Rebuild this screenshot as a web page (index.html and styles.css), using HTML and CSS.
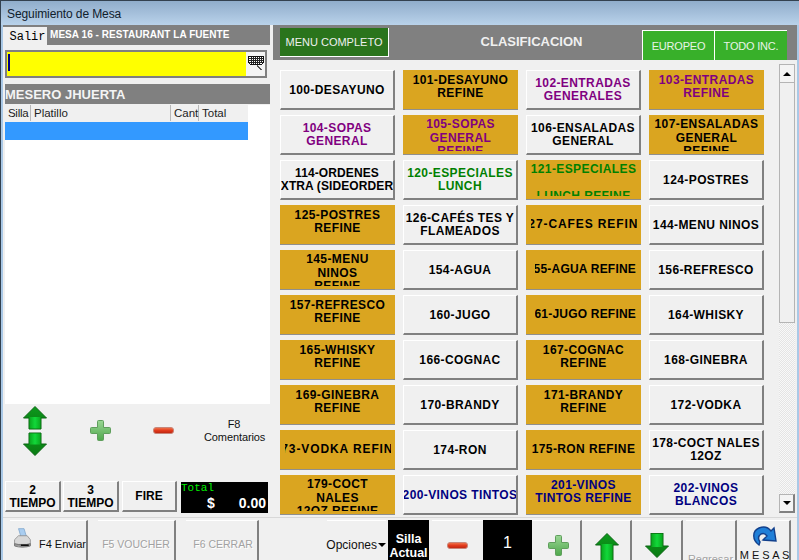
FILE: index.html
```html
<!DOCTYPE html>
<html lang="es">
<head>
<meta charset="utf-8">
<title>Seguimiento de Mesa</title>
<link rel="stylesheet" href="styles.css">
</head>
<body>
<svg class="defs" width="0" height="0" aria-hidden="true">
  <defs>
    <linearGradient id="gArrow" x1="0" y1="0" x2="0" y2="1"><stop offset="0" stop-color="#0c9a1c"/><stop offset="1" stop-color="#0a7a12"/></linearGradient>
    <linearGradient id="gShaft" x1="0" y1="0" x2="1" y2="0"><stop offset="0" stop-color="#0aa81e"/><stop offset="0.5" stop-color="#12d83a"/><stop offset="1" stop-color="#0aa81e"/></linearGradient>
    <linearGradient id="gPlus" x1="0" y1="0" x2="0" y2="1"><stop offset="0" stop-color="#9ad694"/><stop offset="1" stop-color="#4fa84c"/></linearGradient>
    <linearGradient id="gMinus" x1="0" y1="0" x2="0" y2="1"><stop offset="0" stop-color="#f07a50"/><stop offset="0.5" stop-color="#e23a1c"/><stop offset="1" stop-color="#b82410"/></linearGradient>
    <symbol id="plus" viewBox="0 0 21 21"><path d="M7.5 1.5a1 1 0 0 1 1-1h4a1 1 0 0 1 1 1v6h6a1 1 0 0 1 1 1v4a1 1 0 0 1-1 1h-6v6a1 1 0 0 1-1 1h-4a1 1 0 0 1-1-1v-6h-6a1 1 0 0 1-1-1v-4a1 1 0 0 1 1-1h6z" fill="url(#gPlus)" stroke="#5f9e5c"/></symbol>
    <symbol id="minus" viewBox="0 0 21 7"><rect x="0.5" y="0.5" width="20" height="6" rx="2.5" fill="url(#gMinus)" stroke="#c8867a"/></symbol>
  </defs>
</svg>
<div class="window">
  <div class="titlebar">Seguimiento de Mesa</div>
  <div class="client">
    <button class="salir">Salir</button>
    <div class="main">
      <section class="left">
        <div class="mesa-bar">MESA 16 - RESTAURANT LA FUENTE</div>
        <div class="search">
          <div class="search-field"><span class="caret"></span></div>
          <div class="kbd">
            <svg width="16" height="14" viewBox="0 0 16 14" shape-rendering="crispEdges"><path d="M.5.5h15v6l-2 2h-11l-2-2z" fill="#fff" stroke="#111"/><path d="M1 2.5h14M1 4.5h14M1 6.5h14M3.5 1v7M5.5 1v7M7.5 1v7M9.5 1v7M11.5 1v7M13.5 1v6" stroke="#222"/><path d="M9 9h1v1h1v1h1v1h1v1h1v1h-2v-1h-1v-1h-1v-1H9z" fill="#555"/></svg>
          </div>
        </div>
        <div class="mesero-bar">MESERO JHUERTA</div>
        <div class="list">
          <div class="list-head">
            <span class="col-silla">Silla</span>
            <span class="col-platillo">Platillo</span>
            <span class="col-cant">Cant</span>
            <span class="col-total">Total</span>
          </div>
          <div class="list-row"></div>
        </div>
        <div class="controls">
          <div class="ctl-arrows">
            <svg width="24" height="50" viewBox="0 0 24 50">
              <path d="M12 .5 23.5 12H18v11H6V12H.5z" fill="url(#gArrow)" stroke="#0a6412"/>
              <rect x="6.5" y="11" width="11" height="11.5" fill="url(#gShaft)"/>
              <path d="M12 49.5 23.5 38H18V27H6v11H.5z" fill="url(#gArrow)" stroke="#0a6412"/>
              <rect x="6.5" y="27.5" width="11" height="11" fill="url(#gShaft)"/>
            </svg>
          </div>
          <div class="ctl-plus"><svg width="21" height="21"><use href="#plus"/></svg></div>
          <div class="ctl-minus"><svg width="21" height="7"><use href="#minus"/></svg></div>
          <div class="ctl-coment">F8<br>Comentarios</div>
        </div>
        <div class="actions">
          <button class="btn act act-a">2<br>TIEMPO</button>
          <button class="btn act act-a">3<br>TIEMPO</button>
          <button class="btn act act-b">FIRE</button>
          <div class="total">
            <div class="total-label">Total</div>
            <div class="total-val"><span>$</span><span>0.00</span></div>
          </div>
        </div>
      </section>
      <section class="right">
        <div class="class-bar">
          <button class="menu-full">MENU COMPLETO</button>
          <div class="class-title">CLASIFICACION</div>
          <div class="tabs">
            <button class="tab tab-eu">EUROPEO</button>
            <button class="tab tab-ti">TODO INC.</button>
          </div>
        </div>
        <div class="menu-wrap">
          <div class="grid">
            <button class="btn item">100-DESAYUNO</button>
            <button class="btn item gold">101-DESAYUNO<br>REFINE</button>
            <button class="btn item purple">102-ENTRADAS<br>GENERALES</button>
            <button class="btn item gold purple">103-ENTRADAS<br>REFINE</button>

            <button class="btn item purple">104-SOPAS<br>GENERAL</button>
            <button class="btn item gold purple tall">105-SOPAS<br>GENERAL<br>REFINE</button>
            <button class="btn item">106-ENSALADAS<br>GENERAL</button>
            <button class="btn item gold tall">107-ENSALADAS<br>GENERAL<br>REFINE</button>

            <button class="btn item snug">114-ORDENES<br>XTRA (SIDEORDER</button>
            <button class="btn item green">120-ESPECIALES<br>LUNCH</button>
            <button class="btn item gold green tall">121-ESPECIALES<br><br>LUNCH REFINE</button>
            <button class="btn item">124-POSTRES</button>

            <button class="btn item gold">125-POSTRES<br>REFINE</button>
            <button class="btn item">126-CAFÉS TES Y<br>FLAMEADOS</button>
            <button class="btn item gold one clip-both">127-CAFES REFINE</button>
            <button class="btn item">144-MENU NINOS</button>

            <button class="btn item gold tall">145-MENU<br>NINOS<br>REFINE</button>
            <button class="btn item">154-AGUA</button>
            <button class="btn item gold one clip-left">155-AGUA REFINE</button>
            <button class="btn item">156-REFRESCO</button>

            <button class="btn item gold">157-REFRESCO<br>REFINE</button>
            <button class="btn item">160-JUGO</button>
            <button class="btn item gold one clip-left">161-JUGO REFINE</button>
            <button class="btn item">164-WHISKY</button>

            <button class="btn item gold">165-WHISKY<br>REFINE</button>
            <button class="btn item">166-COGNAC</button>
            <button class="btn item gold">167-COGNAC<br>REFINE</button>
            <button class="btn item">168-GINEBRA</button>

            <button class="btn item gold">169-GINEBRA<br>REFINE</button>
            <button class="btn item">170-BRANDY</button>
            <button class="btn item gold">171-BRANDY<br>REFINE</button>
            <button class="btn item">172-VODKA</button>

            <button class="btn item gold one clip-both">173-VODKA REFINE</button>
            <button class="btn item">174-RON</button>
            <button class="btn item gold one">175-RON REFINE</button>
            <button class="btn item">178-COCT NALES<br>12OZ</button>

            <button class="btn item gold tall">179-COCT<br>NALES<br>12OZ REFINE</button>
            <button class="btn item navy">200-VINOS TINTOS</button>
            <button class="btn item gold navy">201-VINOS<br>TINTOS REFINE</button>
            <button class="btn item navy">202-VINOS<br>BLANCOS</button>
          </div>
          <div class="scroll">
            <div class="sb-btn"><span class="tri-up"></span></div>
            <div class="sb-thumb"></div>
            <div class="sb-track"></div>
            <div class="sb-btn sb-btn-down"><span class="tri-down"></span></div>
          </div>
        </div>
      </section>
    </div>
    <div class="bottom">
      <div class="bottom-left">
        <button class="bb bb-f4">
          <svg width="24" height="25" viewBox="0 0 24 25">
            <path d="M7 0h7l3 10H10z" fill="#a9cdf0" stroke="#7fa6cc"/>
            <path d="M2 14 7 9h11l4 5v6H2z" fill="#d8d8d8" stroke="#8a8a8a"/>
            <path d="M2 19c6 2 14 2 20 0v3c-6 2-14 2-20 0z" fill="#9a9a9a" stroke="#6a6a6a"/>
            <path d="M10 21h10" stroke="#111" stroke-width="2"/>
          </svg>
          <span>F4 Enviar</span>
        </button>
        <button class="bb bb-f5 off">F5 VOUCHER</button>
        <button class="bb bb-f6 off">F6 CERRAR</button>
      </div>
      <div class="bottom-right">
        <button class="bb opc"><span>Opciones</span><span class="tri-down opc-tri"></span></button>
        <div class="silla">Silla<br>Actual</div>
        <button class="bb sq sq-minus"><svg width="21" height="7"><use href="#minus"/></svg></button>
        <div class="num">1</div>
        <button class="bb sq sq-plus"><svg width="21" height="21"><use href="#plus"/></svg></button>
        <button class="bb sq sq-up">
          <svg width="24" height="28" viewBox="0 0 24 28"><path d="M12 .5 23.5 12H18v16H6V12H.5z" fill="url(#gArrow)" stroke="#0a6412"/><rect x="6.5" y="11" width="11" height="17" fill="url(#gShaft)"/></svg>
        </button>
        <button class="bb sq sq-down">
          <svg width="24" height="25" viewBox="0 0 24 25"><path d="M12 24.5 23.5 13H18V0H6v13H.5z" fill="url(#gArrow)" stroke="#0a6412"/><rect x="6.5" y="1" width="11" height="13" fill="url(#gShaft)"/></svg>
        </button>
        <button class="bb regresar off">Regresar</button>
        <button class="bb mesas">
          <svg width="25" height="21" viewBox="0 0 25 21"><path d="M7 20C0 15 0 6 7 3c5-2 9-1 12 3l3-3 2 13-13-1 4-4c-2-3-4-3-6-2-3 2-3 5-1 8z" fill="#1f7fd8" stroke="#12408c" stroke-width="1.4"/></svg>
          <span>M E S A S</span>
        </button>
      </div>
    </div>
  </div>
</div>
</body>
</html>
```
FILE: styles.css
```css
* { box-sizing: border-box; }
html, body { margin: 0; padding: 0; }
body { width: 799px; height: 560px; overflow: hidden; font-family: "Liberation Sans", Arial, sans-serif; }
button { font-family: inherit; padding: 0; margin: 0; cursor: default; white-space: nowrap; }
.defs { position: absolute; }

.window {
  width: 799px; height: 560px; display: flex; flex-direction: column; overflow: hidden;
  background: #a9c8e6; border-left: 1px solid #33414f; padding-right: 2px;
}
.titlebar {
  height: 25px; flex: none; margin-left: -1px; padding: 6px 0 0 7px;
  font-size: 12px; line-height: 15px; letter-spacing: -0.1px; color: #10202c; margin-right: -2px;
  background: linear-gradient(#90adcb, #b9d2ea);
  border-top: 1px solid #33414f;
}
.client { position: relative; flex: 1; display: flex; flex-direction: column; margin-left: 2px; background: #f0f0f0; min-height: 0; }
.salir {
  position: absolute; left: 0; top: 2px; width: 44px; height: 18px; border: 0; padding-left: 5px;
  background: #f0f0f0; font: 12px/20px "Liberation Mono", monospace; color: #000;
}
.main { display: flex; height: 492px; flex: none; }

/* left panel */
.left { width: 267px; flex: none; display: flex; flex-direction: column; }
.mesa-bar {
  height: 20px; background: #808080; color: #fff; font-weight: bold; font-size: 10px;
  line-height: 20px; padding-left: 47px; flex: none; letter-spacing: 0.05px;
}
.search { display: flex; height: 28px; margin: 5px 3px 6px 2px; border: 2px solid #808080; flex: none; }
.search-field { flex: 1; background: #ffff00; padding: 2px 0 0 1px; }
.caret { display: block; width: 2px; height: 17px; background: #000080; }
.kbd { width: 19px; background: #f4f4f4; display: flex; justify-content: center; padding-top: 4px; }
.mesero-bar {
  height: 20px; margin-left: 2px; background: #808080; color: #f4f4f4; font-weight: bold;
  font-size: 13px; line-height: 21px; flex: none;
}
.list { height: 299px; margin: 1px 0 0 2px; background: #fff; flex: none; }
.list-head { width: 243px; height: 17px; background: #f0f0f0; display: flex; font-size: 11.5px; line-height: 17px; color: #222; }
.list-head span { border-right: 1px solid #b8b8b8; padding-left: 3px; height: 16px; }
.col-silla { width: 26px; letter-spacing: -0.3px; }
.col-platillo { width: 140px; }
.col-cant { width: 28px; }
.col-total { flex: 1; border-right: 0 !important; }
.list-row { width: 243px; height: 18px; background: #3399ff; }

.controls { height: 77px; display: flex; align-items: center; padding: 0 0 24px 2px; flex: none; font-size: 11px; color: #111; }
.ctl-arrows { width: 60px; display: flex; justify-content: center; }
.ctl-plus { width: 70px; display: flex; justify-content: center; }
.ctl-minus { width: 56px; display: flex; justify-content: center; }
.ctl-coment { margin-left: 13px; width: 60px; text-align: center; line-height: 13px; font-size: 11px; letter-spacing: -0.1px; }

.btn {
  border: 1px solid; border-color: #fff #808080 #808080 #fff; border-width: 1px 2px 2px 1px;
  background: #f0f0f0; color: #000; font-weight: bold; font-size: 12px; letter-spacing: 0.4px;
}
.actions { display: flex; height: 33px; padding-left: 2px; flex: none; }
.act { height: 31px; line-height: 13px; font-size: 12px; letter-spacing: 0; padding-top: 2px; }
.act-a { width: 56px; margin-right: 2px; }
.act-b { width: 55px; margin-left: 1px; margin-right: 4px; padding-top: 0; }
.total { width: 87px; height: 31px; background: #000; color: #fff; margin-top: 1px; }
.total-label { font: 11px/11px "Liberation Mono", monospace; color: #00f000; padding-top: 1px; }
.total-val { display: flex; justify-content: space-between; padding: 2px 2px 0 26px; font-weight: bold; font-size: 14px; line-height: 14px; }

/* right panel */
.right { flex: 1; margin-left: 3px; display: flex; flex-direction: column; min-width: 0; }
.class-bar { height: 35px; background: #808080; display: flex; flex: none; padding-left: 7px; }
.menu-full {
  width: 109px; height: 29px; margin-top: 3px; background: #2a741c; color: #f0f0f0;
  border: 0; border-right: 1px solid #fff; border-bottom: 1px solid #fff; font-size: 11px;
}
.class-title { flex: 1; text-align: center; color: #f0f0f0; font-weight: bold; font-size: 13px; line-height: 34px; padding-left: 32px; }
.tabs { display: flex; margin-right: 10px; margin-top: 5px; height: 30px; }
.tab {
  height: 30px; background: #38b02a; color: #e8f4e8; border: 0; border-top: 1px solid #fff; border-left: 1px solid #fff;
  font-size: 11px; letter-spacing: -0.2px;
}
.tab-eu { width: 72px; }
.tab-ti { width: 73px; }
.menu-wrap { flex: 1; display: flex; align-items: flex-start; padding: 4px 0 0 7px; min-height: 0; }
.grid { display: grid; grid-template-columns: repeat(4, 115px); grid-auto-rows: 40px; column-gap: 8px; row-gap: 5px; margin-top: 6px; }
.item {
  height: 40px; width: 115px; overflow: hidden; display: flex; align-items: center; justify-content: center;
  text-align: center; white-space: nowrap; line-height: 13px; padding-top: 1px;
}
.snug { letter-spacing: 0.1px; }
.gold { background: #daa520; border: 0; height: 39px; box-shadow: 0 1px 0 #8f8f8f; padding-top: 0; padding-bottom: 6px; }
.one { padding-bottom: 0; }
.clip-both { letter-spacing: 0.9px; border-left: 5px solid #daa520; border-right: 4px solid #daa520; }
.clip-left { letter-spacing: 0.2px; justify-content: flex-end; border-left: 9px solid #daa520; border-right: 5px solid #daa520; }
.tall { align-items: flex-start; padding-top: 3px; padding-bottom: 0; line-height: 13.5px; border-bottom: 3px solid #daa520; }
.purple { color: #800080; }
.green { color: #008000; }
.navy { color: #000080; }

.scroll { width: 16px; height: 449px; margin-left: 15px; display: flex; flex-direction: column; flex: none; }
.sb-btn { height: 19px; border: 1px solid #b4b4b4; background: #f4f4f4; display: flex; align-items: center; justify-content: center; flex: none; }
.sb-btn-down { border-bottom: 2px solid #808080; border-right: 2px solid #808080; }
.sb-thumb { height: 240px; background: #f0f0f0; border: 1px solid #b4b4b4; border-top: 0; flex: none; }
.sb-track {
  flex: 1; background-color: #f6f6f6;
  background-image: repeating-conic-gradient(#e4e4e4 0 25%, #f8f8f8 0 50%); background-size: 2px 2px;
}
.tri-up { width: 0; height: 0; border-left: 4px solid transparent; border-right: 4px solid transparent; border-bottom: 4px solid #000; }
.tri-down { width: 0; height: 0; border-left: 4px solid transparent; border-right: 4px solid transparent; border-top: 4px solid #000; }

/* bottom */
.bottom { flex: 1; display: flex; min-height: 0; padding-top: 2px; border-top: 1px solid #d8d8d8; }
.bottom-left { display: flex; padding-left: 7px; width: 324px; flex: none; }
.bb {
  height: 42px; background: #f0f0f0; border: 0; border-right: 2px solid #808080; border-top: 1px solid #fff;
  font-size: 12px; color: #111; flex: none; display: flex; align-items: center; justify-content: center;
}
.bb-f4 { width: 78px; margin-right: 10px; justify-content: flex-start; padding: 0 0 6px 3px; gap: 7px; }
.bb-f4 span { padding-top: 10px; font-size: 11px; }
.bb-f5 { width: 78px; margin-right: 10px; padding-top: 4px; font-size: 10.5px; }
.bb-f6 { width: 73px; padding-top: 4px; padding-left: 3px; font-size: 10.5px; }
.off { color: #a2a2a2; text-shadow: 1px 1px 0 #fff; }
.bottom-right { display: flex; }
.opc { width: 59px; padding-top: 6px; gap: 1px; justify-content: flex-end; border-right: 0; }
.silla { width: 41px; height: 42px; margin: 0 3px 0 2px; background: #000; color: #fff; font-weight: bold; font-size: 12.5px; line-height: 14px; text-align: center; padding-top: 12px; flex: none; }
.num { width: 49px; height: 42px; background: #000; color: #fff; font-size: 16px; text-align: center; line-height: 46px; flex: none; }
.sq { width: 50px; align-items: flex-start; }
.sq-minus { width: 51px; padding-top: 21px; border-right: 0; }
.sq-plus { padding-top: 14px; padding-left: 4px; }
.sq-up { padding-top: 12px; padding-left: 2px; }
.sq-down { padding-top: 12px; width: 51px; }
.regresar { width: 51px; margin-left: 3px; font-size: 11px; align-items: flex-start; padding-top: 32px; }
.mesas { width: 51px; margin-left: 3px; flex-direction: column; justify-content: flex-start; padding-top: 4px; font-size: 11px; gap: 3px; }
```
